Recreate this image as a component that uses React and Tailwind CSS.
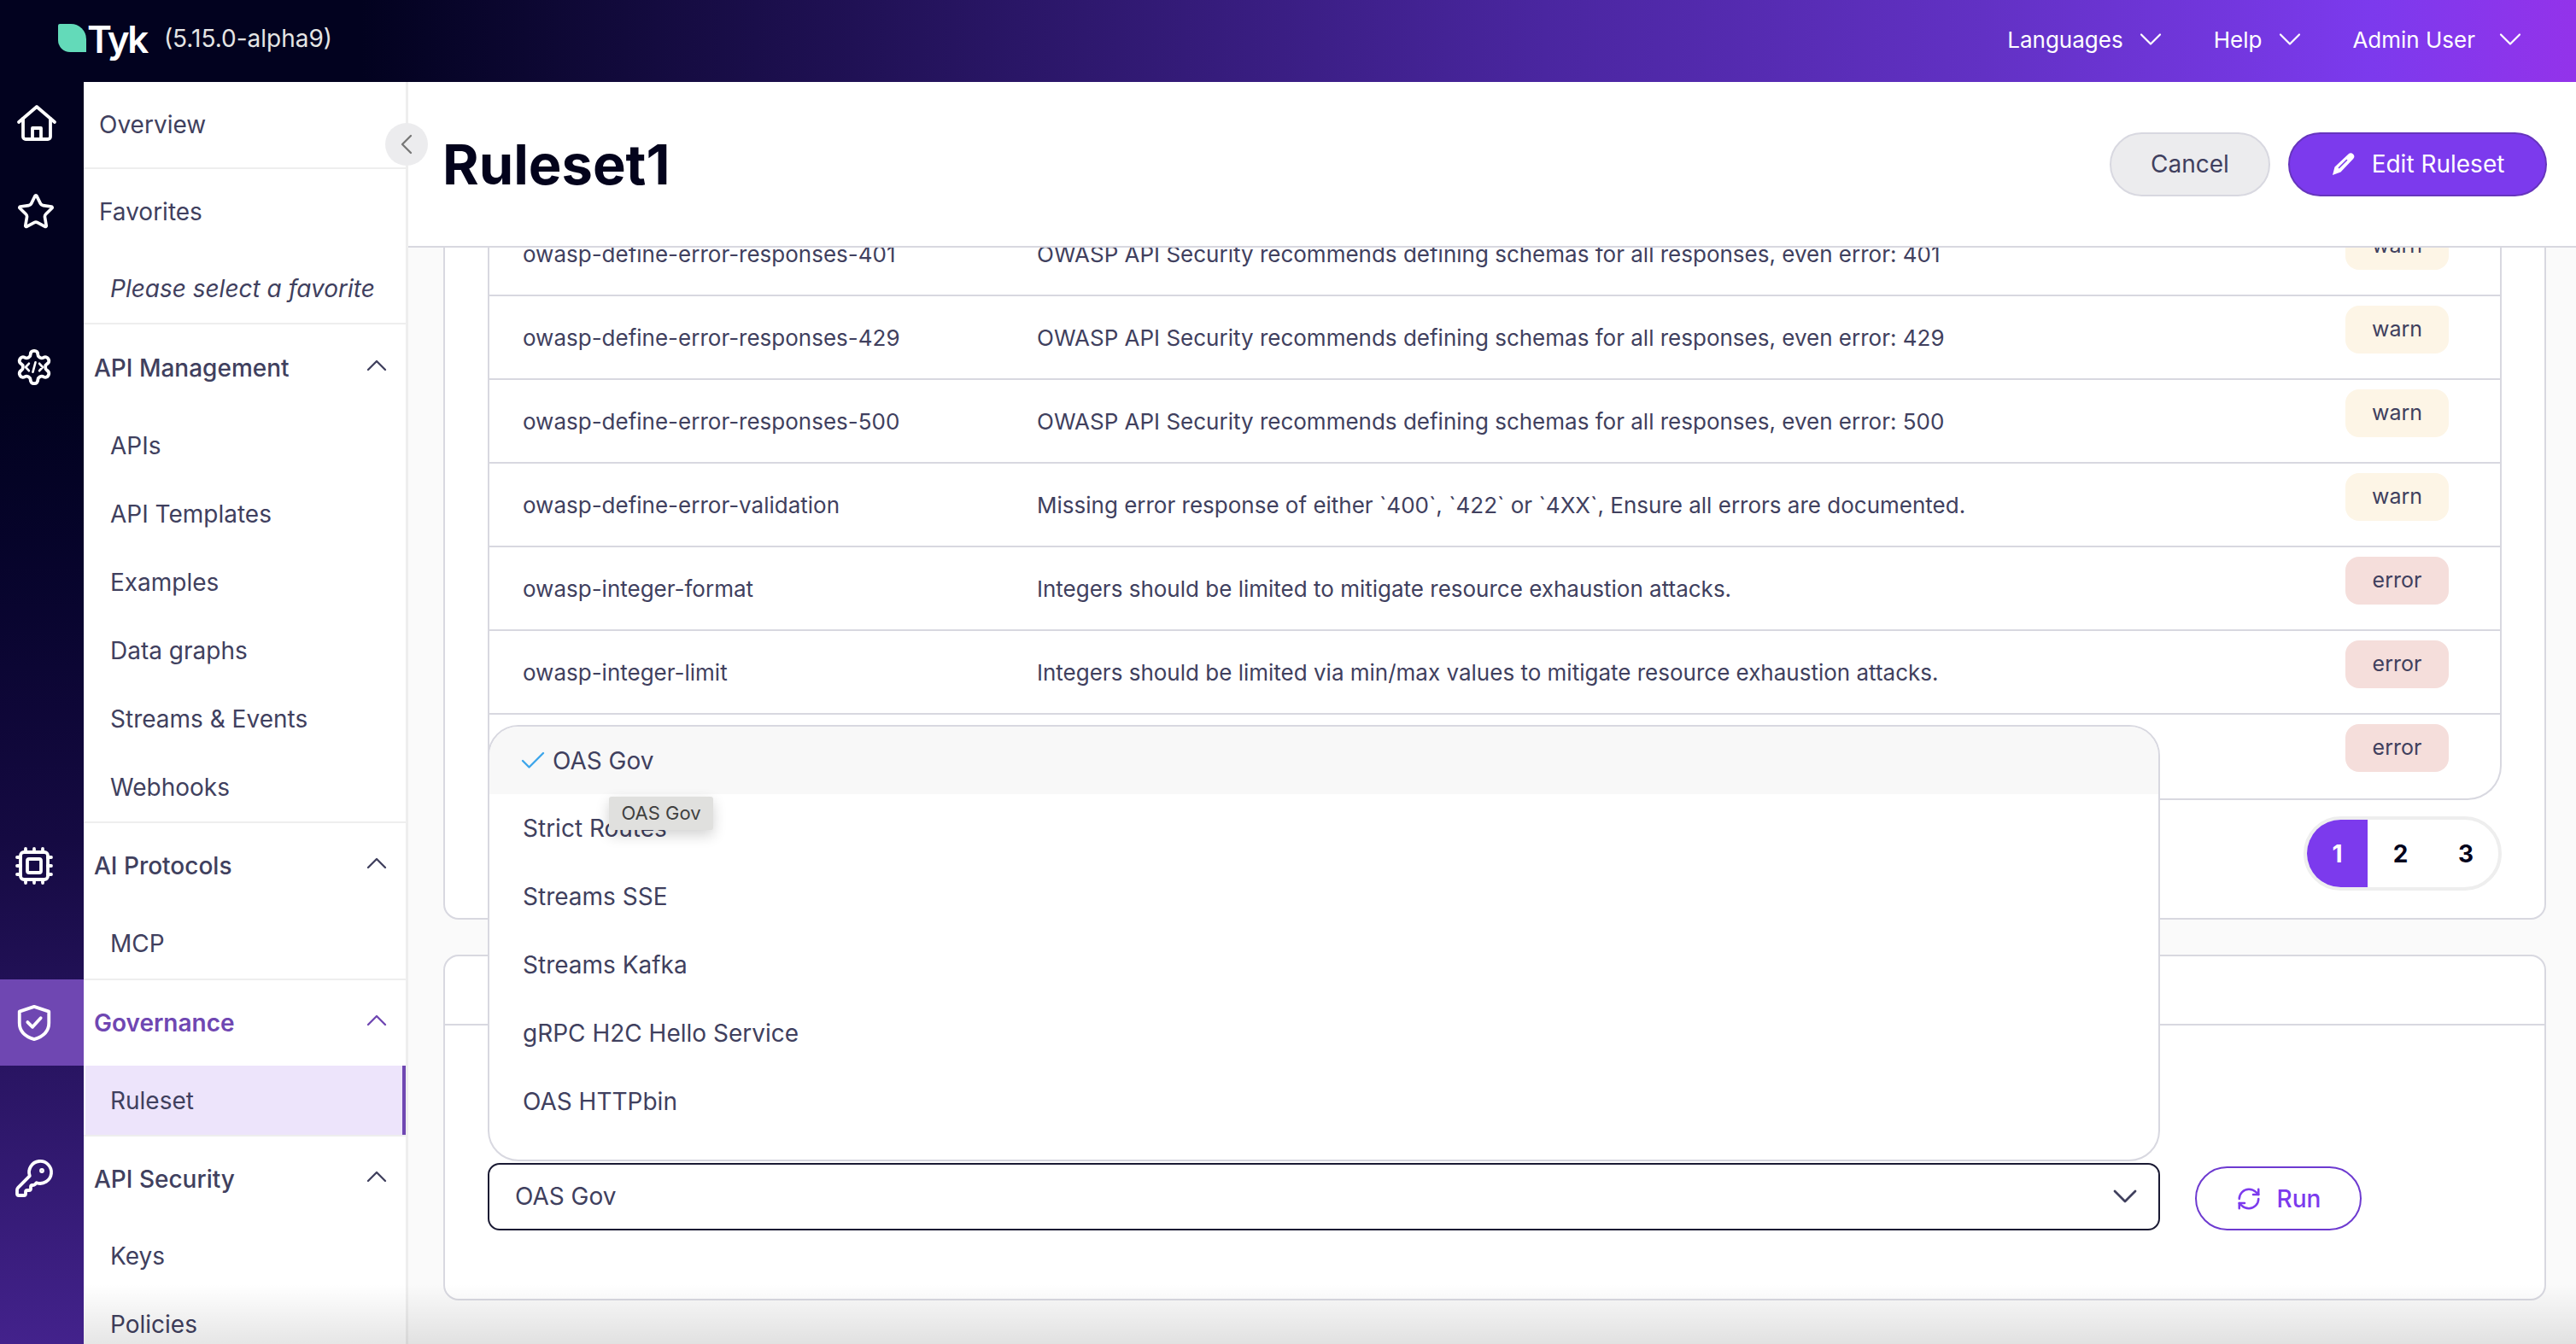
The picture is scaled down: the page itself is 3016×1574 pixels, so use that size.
import { Star, ChevronUp, ChevronDown, ChevronLeft, Cpu, KeyRound, RefreshCw, Check } from 'lucide-react';

const FONT = "font-['Inter','Noto_Sans',sans-serif]";

const rules = [
  ['owasp-define-error-responses-401', 'OWASP API Security recommends defining schemas for all responses, even error: 401', 'warn'],
  ['owasp-define-error-responses-429', 'OWASP API Security recommends defining schemas for all responses, even error: 429', 'warn'],
  ['owasp-define-error-responses-500', 'OWASP API Security recommends defining schemas for all responses, even error: 500', 'warn'],
  ['owasp-define-error-validation', 'Missing error response of either `400`, `422` or `4XX`, Ensure all errors are documented.', 'warn'],
  ['owasp-integer-format', 'Integers should be limited to mitigate resource exhaustion attacks.', 'error'],
  ['owasp-integer-limit', 'Integers should be limited via min/max values to mitigate resource exhaustion attacks.', 'error'],
  ['', '', 'error'], // text of this row sits under the open dropdown
];

const apis = ['Strict Routes', 'Streams SSE', 'Streams Kafka', 'gRPC H2C Hello Service', 'OAS HTTPbin'];

function HomeIcon() {
  return (
    <svg width="48" height="48" viewBox="0 0 24 24" fill="none" stroke="currentColor" strokeWidth="1.9" strokeLinecap="round" strokeLinejoin="round">
      <path d="M1.5 11.5 12 2.5l10.5 9" />
      <path d="M4 9.5V20a1.5 1.5 0 0 0 1.5 1.5h13A1.5 1.5 0 0 0 20 20V9.5" />
      <path d="M9.5 21.5V15h5v6.5" />
    </svg>
  );
}

function GearCodeIcon() {
  return (
    <svg width="46" height="46" viewBox="0 0 24 24" fill="none" stroke="currentColor" strokeWidth="2" strokeLinecap="round" strokeLinejoin="round">
      <path d="M12.22 2h-.44a2 2 0 0 0-2 2v.18a2 2 0 0 1-1 1.73l-.43.25a2 2 0 0 1-2 0l-.15-.08a2 2 0 0 0-2.73.73l-.22.38a2 2 0 0 0 .73 2.73l.15.1a2 2 0 0 1 1 1.72v.51a2 2 0 0 1-1 1.74l-.15.09a2 2 0 0 0-.73 2.73l.22.38a2 2 0 0 0 2.73.73l.15-.08a2 2 0 0 1 2 0l.43.25a2 2 0 0 1 1 1.73V20a2 2 0 0 0 2 2h.44a2 2 0 0 0 2-2v-.18a2 2 0 0 1 1-1.73l.43-.25a2 2 0 0 1 2 0l.15.08a2 2 0 0 0 2.73-.73l.22-.39a2 2 0 0 0-.73-2.73l-.15-.08a2 2 0 0 1-1-1.74v-.5a2 2 0 0 1 1-1.74l.15-.09a2 2 0 0 0 .73-2.73l-.22-.38a2 2 0 0 0-2.73-.73l-.15.08a2 2 0 0 1-2 0l-.43-.25a2 2 0 0 1-1-1.73V4a2 2 0 0 0-2-2z" />
      <path d="M8.8 9.8 6.8 12l2 2.2M15.2 9.8l2 2.2-2 2.2M12.8 9l-1.6 6" strokeWidth="1.4" />
    </svg>
  );
}

function ShieldIcon() {
  return (
    <svg width="46" height="46" viewBox="0 0 24 24" fill="none" stroke="currentColor" strokeWidth="2" strokeLinecap="round" strokeLinejoin="round">
      <path d="M12 2l9 3v7c0 5.5-4 8.5-9 10-5-1.5-9-4.5-9-10V5z" />
      <path d="M8 11.5l3 3 5-5.5" />
    </svg>
  );
}

function PencilIcon() {
  return (
    <svg width="30" height="30" viewBox="0 0 30 30">
      <path fill="currentColor" d="M20.5 3.5a4 4 0 0 1 5.7 5.6L11.5 24.5 2 28l2.500-9.500z" />
      <path fill="none" stroke="#7c3aed" strokeWidth="1.6" strokeLinecap="round" d="M18.500 10.500 9.500 19.500" />
    </svg>
  );
}

function Rail() {
  return (
    <div className="flex flex-col w-[98px] shrink-0 text-white bg-gradient-to-b from-[#02021f] from-25% via-[#150a42] via-60% to-[#43228c]">
      <div className="flex items-center h-[96px] shrink-0 pl-[19px]"><HomeIcon /></div>
      <div className="flex items-center h-[112px] shrink-0 pl-[19px]"><Star size={46} strokeWidth={1.9} /></div>
      <div className="flex items-center h-[252px] shrink-0 pl-[17px]"><GearCodeIcon /></div>
      <div className="flex items-center h-[80px] shrink-0 mt-[418px] pl-[16px]"><Cpu size={48} strokeWidth={1.9} /></div>
      <div className="flex items-center h-[101px] shrink-0 mt-[93px] pl-[17px] bg-[#6f47b2]"><ShieldIcon /></div>
      <div className="flex items-center h-[80px] shrink-0 mt-[92px] pl-[16px]"><KeyRound size={48} strokeWidth={1.9} /></div>
    </div>
  );
}

function NavItem({ children, active, h = 'h-[80px]' }) {
  return (
    <div
      className={`flex items-center ${h} shrink-0 text-[28px] text-[#40405e] ${
        active ? 'bg-[#ede4fb] border-r-4 border-[#6f47b2] ml-[2px] pl-[29px]' : 'pl-[31px]'
      }`}
    >
      {children}
    </div>
  );
}

function NavGroup({ title, active, h = 'h-[100px]' }) {
  return (
    <div className={`flex items-center justify-between ${h} shrink-0 pl-[12px] pr-[14px] text-[28px] ${active ? 'font-semibold text-[#6f47b2]' : 'font-medium text-[#40405e]'}`}>
      <span>{title}</span>
      <ChevronUp size={40} strokeWidth={1.4} className="mb-[6px]" />
    </div>
  );
}

function Divider() {
  return <div className="h-[2px] bg-[#eeeeee] shrink-0" />;
}

function Sidebar() {
  return (
    <div className="relative flex flex-col w-[380px] shrink-0 bg-white border-r-[3px] border-[#eeeeee]">
      <div className="flex items-center h-[100px] shrink-0 pl-[18px] text-[28px] text-[#40405e]">Overview</div>
      <Divider />
      <div className="flex items-center h-[100px] shrink-0 pl-[18px] text-[28px] text-[#40405e]">Favorites</div>
      <div className="flex items-center h-[80px] shrink-0 pl-[31px] text-[28px] italic text-[#40405e]">Please select a favorite</div>
      <Divider />
      <NavGroup title="API Management" h="h-[102px]" />
      {['APIs', 'API Templates', 'Examples', 'Data graphs', 'Streams & Events', 'Webhooks'].map((n) => (
        <NavItem key={n}>{n}</NavItem>
      ))}
      <Divider />
      <NavGroup title="AI Protocols" />
      <NavItem h="h-[82px]">MCP</NavItem>
      <Divider />
      <NavGroup title="Governance" active />
      <NavItem active h="h-[81px]">Ruleset</NavItem>
      <Divider />
      <NavGroup title="API Security" />
      <NavItem>Keys</NavItem>
      <NavItem>Policies</NavItem>
      {/* collapse toggle */}
      <button className="absolute left-[353px] top-[48px] flex items-center justify-center w-[50px] h-[50px] rounded-full bg-[#ececee] text-[#777777]">
        <ChevronLeft size={40} strokeWidth={1.4} />
      </button>
    </div>
  );
}

function Badge({ level }) {
  return (
    <span className={`flex items-center justify-center w-[121px] h-[56px] rounded-[16px] text-[25px] text-[#40405e] ${level === 'warn' ? 'bg-[#fdf5e6]' : 'bg-[#f5dedb]'}`}>
      {level}
    </span>
  );
}

function RuleRow({ rule, last }) {
  return (
    <div className={`flex items-center h-[98px] shrink-0 text-[26px] text-[#40405e] ${last ? '' : 'border-b-[2px] border-[#d8d8e0]'}`}>
      <div className="w-[641px] pl-[39px] shrink-0">{rule[0]}</div>
      <div className="flex-1">{rule[1]}</div>
      <div className="self-start mt-[11px] mr-[60px]"><Badge level={rule[2]} /></div>
    </div>
  );
}

function Dropdown() {
  return (
    <div className="absolute left-[93px] top-[559px] w-[1958px] h-[511px] overflow-hidden bg-white border-[2px] border-[#d8d8e0] rounded-[36px] text-[28px] text-[#40405e]">
      <div className="flex items-center h-[79px] pl-[33px] bg-[#f8f8f8]">
        <Check size={36} strokeWidth={1.6} className="text-[#3ea6ea] mr-[5px]" />
        OAS Gov
      </div>
      {apis.map((a) => (
        <div key={a} className="flex items-center h-[80px] pl-[39px]">{a}</div>
      ))}
    </div>
  );
}

function Content() {
  return (
    <div className="relative flex-1 overflow-hidden bg-[#fafafa]">
      <div className="flex flex-col gap-[41px] pl-[41px] pr-[35px] mt-[-43px]">
        <div className="flex flex-col shrink-0 bg-white border-[2px] border-[#d8d8e0] rounded-b-[18px] h-[830px] px-[50px]">
          <div className="border-x-[2px] border-b-[2px] border-[#d8d8e0] rounded-b-[40px]">
            {rules.map((r, i) => (
              <RuleRow key={i} rule={r} last={i === rules.length - 1} />
            ))}
          </div>
          <div className="flex justify-end mt-[19px]">
            <div className="flex items-center h-[87px] border-[4px] border-[#eeeeee] rounded-full overflow-hidden text-[28px] font-bold text-[#03031c]">
              <span className="flex items-center justify-center w-[71px] h-full bg-[#7c3aed] text-white">1</span>
              <span className="flex items-center justify-center w-[77px]">2</span>
              <span className="flex items-center justify-center w-[76px]">3</span>
            </div>
          </div>
        </div>
        <div className="flex flex-col shrink-0 h-[405px] bg-white border-[2px] border-[#d8d8e0] rounded-[18px]">
          <div className="h-[81px] shrink-0 border-b-[2px] border-[#d8d8e0]" />
          <div className="flex items-end gap-[41px] pl-[50px] pb-[80px] flex-1">
            <div className="flex items-center justify-between w-[1958px] h-[79px] pl-[30px] pr-[15px] pb-[2px] border-[2px] border-[#1a1a33] rounded-[14px] text-[28px] text-[#40405e]">
              OAS Gov
              <ChevronDown size={48} strokeWidth={1.4} />
            </div>
            <button className="flex items-center justify-center gap-[18px] w-[195px] h-[75px] border-[2px] border-[#6d3ad0] rounded-full text-[28px] font-medium text-[#7c3aed]">
              <RefreshCw size={30} strokeWidth={2} />
              Run
            </button>
          </div>
        </div>
      </div>
      <Dropdown />
      {/* tooltip on hover */}
      <div className="absolute left-[235px] top-[643px] flex items-center justify-center w-[122px] h-[39px] bg-[#e0e0de] rounded-[3px] shadow-[0_6px_16px_rgba(0,0,0,0.18)] text-[22px] text-[#40403f]">
        OAS Gov
      </div>
    </div>
  );
}

export default function App() {
  return (
    <div className={`relative flex flex-col w-[3016px] h-[1574px] overflow-hidden bg-white ${FONT}`}>
      <header className="flex items-center justify-between h-[96px] shrink-0 text-white bg-[linear-gradient(90deg,#02021f_14%,#4a26a0_60%,#6231c4_77%,#7c3aed_92%,#9333ea_100%)]">
        <div className="flex items-center ml-[68px]">
          <span className="block w-[33px] h-[33px] mb-[8px] bg-[#63dab9] rounded-tr-[18px] rounded-bl-[14px] rounded-tl-[2px]" />
          <span className="text-[44px] leading-none font-semibold tracking-[-2.5px] mb-[4px] ml-[1px]">Tyk</span>
          <span className="ml-[20px] text-[28px] text-[#e5e5e5] mb-[6px]">(5.15.0-alpha9)</span>
        </div>
        <nav className="flex items-center mr-[55px] text-[26px] mb-[4px]">
          <span>Languages</span>
          <ChevronDown size={44} strokeWidth={1.2} className="ml-[10px] mr-[52px]" />
          <span>Help</span>
          <ChevronDown size={44} strokeWidth={1.2} className="ml-[11px] mr-[51px]" />
          <span>Admin User</span>
          <ChevronDown size={44} strokeWidth={1.2} className="ml-[19px]" />
        </nav>
      </header>
      <div className="flex flex-1 min-h-0">
        <Rail />
        <Sidebar />
        <main className="flex flex-col flex-1 min-w-0">
          <div className="flex items-center justify-between h-[194px] shrink-0 pl-[40px] pr-[34px] bg-white border-b-[2px] border-[#d8d8e0]">
            <h1 className="text-[65px] font-bold text-[#03031c] leading-none">Ruleset1</h1>
            <div className="flex items-center gap-[21px]">
              <button className="w-[188px] h-[75px] bg-[#ececee] border-[2px] border-[#d8d8e0] rounded-full text-[28px] text-[#40405e]">Cancel</button>
              <button className="flex items-center justify-center gap-[18px] w-[303px] h-[75px] bg-[#7c3aed] border-[2px] border-[#6635bd] rounded-full text-[28px] text-white">
                <PencilIcon />
                Edit Ruleset
              </button>
            </div>
          </div>
          <Content />
        </main>
      </div>
      {/* fade at the bottom of the viewport */}
      <div className="absolute left-[98px] right-0 bottom-0 h-[70px] pointer-events-none bg-gradient-to-b from-transparent to-black/10" />
    </div>
  );
}
